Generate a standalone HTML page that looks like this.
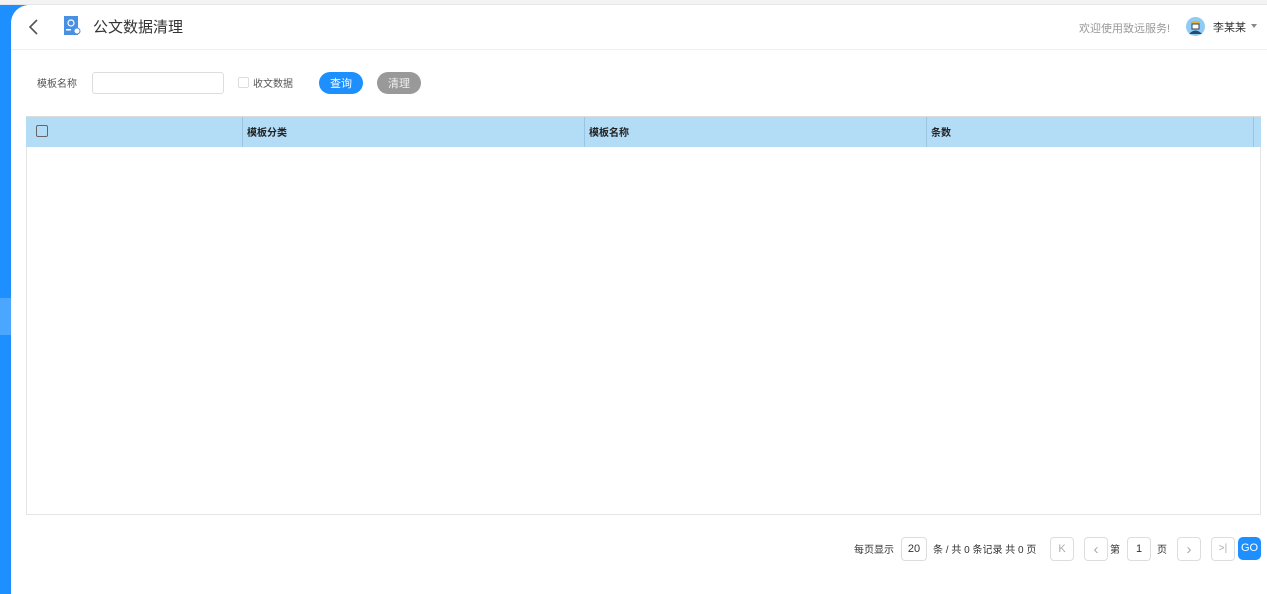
<!DOCTYPE html>
<html><head><meta charset="utf-8"><style>
*{margin:0;padding:0;box-sizing:border-box}
body{width:1267px;height:594px;overflow:hidden;background:#fff;font-family:"Liberation Sans","Noto Sans CJK SC",sans-serif;position:relative;color:#333;line-height:1}
.a{position:absolute}
.b{display:flex;align-items:center;justify-content:center}
</style></head><body>
<div class="a" style="left:0;top:0;width:1267px;height:5px;background:#f3f3f3;border-bottom:1px solid #e6e6e6"></div>
<div class="a" style="left:0;top:5px;width:11px;height:589px;background:#1e8fff"></div>
<div class="a" style="left:0;top:298px;width:11px;height:37px;background:#4aa6ff"></div>
<div class="a" style="left:11px;top:5px;width:16px;height:16px;background:#1e8fff"></div>
<div class="a" style="left:11px;top:5px;width:20px;height:20px;background:#fff;border-top-left-radius:18px"></div>
<div class="a" style="left:11px;top:49px;width:1256px;height:1px;background:#eee"></div>
<svg class="a" style="left:27px;top:19px" width="14" height="16"><path d="M10 1 L3 8 L10 15" fill="none" stroke="#555" stroke-width="1.6"/></svg>
<svg class="a" style="left:64px;top:16px" width="17" height="19"><rect x="0" y="0" width="14" height="19" fill="#4a90e2"/><circle cx="7" cy="7" r="3" fill="none" stroke="#fff" stroke-width="1.2"/><rect x="2" y="13" width="5" height="1.5" fill="#fff"/><circle cx="13" cy="15" r="3" fill="#fff" stroke="#4a90e2"/></svg>
<div class="a" style="left:93px;top:20px;font-size:15px;color:#333">公文数据清理</div>
<div class="a" style="left:1079px;top:24px;font-size:11px;color:#999">欢迎使用致远服务!</div>
<svg class="a" style="left:1186px;top:17px" width="19" height="19"><circle cx="9.5" cy="9.5" r="9.5" fill="#8ecbf5"/><rect x="5" y="4" width="9" height="3" fill="#e2b23a"/><rect x="6" y="7" width="7" height="5" fill="#fff" stroke="#345" stroke-width="1"/><path d="M3 17 Q9.5 10 16 17" fill="#2a4a6a"/></svg>
<div class="a" style="left:1213px;top:23px;font-size:11px;color:#333">李某某</div>
<div class="a" style="left:1251px;top:24px;border:3px solid transparent;border-top:4px solid #888"></div>
<div class="a" style="left:37px;top:80px;font-size:10px;color:#555">模板名称</div>
<div class="a" style="left:92px;top:72px;width:132px;height:22px;border:1px solid #ddd;border-radius:3px"></div>
<div class="a" style="left:238px;top:77px;width:11px;height:11px;border:1px solid #ddd;border-radius:2px"></div>
<div class="a" style="left:253px;top:80px;font-size:10px;color:#555">收文数据</div>
<div class="a b" style="left:319px;top:72px;width:44px;height:22px;border-radius:11px;background:#1e8fff;color:#fff;font-size:11px;padding-top:2px">查询</div>
<div class="a b" style="left:377px;top:72px;width:44px;height:22px;border-radius:11px;background:#999;color:#eee;font-size:11px;padding-top:2px">清理</div>
<div class="a" style="left:26px;top:116px;width:1235px;height:399px;border:1px solid #e4e4e4"></div>
<div class="a" style="left:26px;top:116px;width:1235px;height:31px;background:#b3dcf7;border-top:1px solid #ddd"></div>
<div class="a" style="left:36px;top:125px;width:12px;height:12px;border:1.5px solid #666;border-radius:2px"></div>
<div class="a" style="left:242px;top:117px;width:1px;height:30px;background:#9cc3e0"></div>
<div class="a" style="left:584px;top:117px;width:1px;height:30px;background:#9cc3e0"></div>
<div class="a" style="left:926px;top:117px;width:1px;height:30px;background:#9cc3e0"></div>
<div class="a" style="left:1253px;top:117px;width:1px;height:30px;background:#9cc3e0"></div>
<div class="a" style="left:247px;top:129px;font-size:10px;font-weight:bold;color:#222">模板分类</div>
<div class="a" style="left:589px;top:129px;font-size:10px;font-weight:bold;color:#222">模板名称</div>
<div class="a" style="left:931px;top:129px;font-size:10px;font-weight:bold;color:#222">条数</div>
<div class="a" style="left:854px;top:546px;font-size:10px;color:#333">每页显示</div>
<div class="a b" style="left:901px;top:537px;width:26px;height:24px;border:1px solid #ddd;border-radius:4px;font-size:11px">20</div>
<div class="a" style="left:933px;top:546px;font-size:10px;color:#333">条 / 共 0 条记录 共 0 页</div>
<div class="a b" style="left:1050px;top:537px;width:24px;height:24px;border:1px solid #ddd;border-radius:4px;color:#aaa;font-size:11px">K</div>
<div class="a b" style="left:1084px;top:537px;width:24px;height:24px;border:1px solid #ddd;border-radius:4px;color:#aaa;font-size:15px">‹</div>
<div class="a" style="left:1110px;top:546px;font-size:10px">第</div>
<div class="a b" style="left:1127px;top:537px;width:24px;height:24px;border:1px solid #ddd;border-radius:4px;font-size:11px">1</div>
<div class="a" style="left:1157px;top:546px;font-size:10px">页</div>
<div class="a b" style="left:1177px;top:537px;width:24px;height:24px;border:1px solid #ddd;border-radius:4px;color:#aaa;font-size:15px">›</div>
<div class="a b" style="left:1211px;top:537px;width:24px;height:24px;border:1px solid #ddd;border-radius:4px;color:#aaa;font-size:10px">&gt;|</div>
<div class="a b" style="left:1238px;top:537px;width:23px;height:23px;border-radius:5px;background:#1e8fff;color:#fff;font-size:11px">GO</div>
</body></html>
